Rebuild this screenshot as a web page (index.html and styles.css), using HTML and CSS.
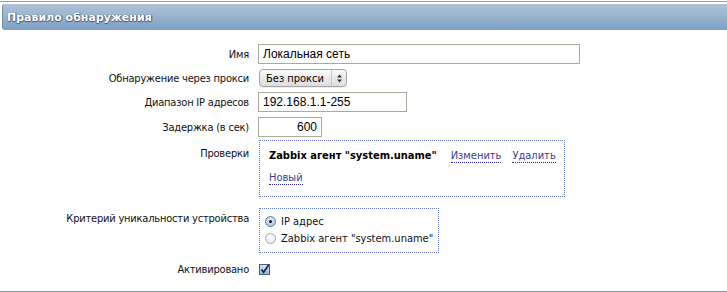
FILE: index.html
```html
<!DOCTYPE html>
<html lang="ru">
<head>
<meta charset="utf-8">
<title>Правило обнаружения</title>
<link rel="stylesheet" href="styles.css">
</head>
<body>
<div class="page">
  <div class="topline"></div>
  <div class="header">Правило обнаружения</div>
  <form class="form">
    <div class="row row-name">
      <label class="label">Имя</label>
      <div class="field"><input class="text text-name" type="text" value="Локальная сеть"></div>
    </div>
    <div class="row row-proxy">
      <label class="label">Обнаружение через прокси</label>
      <div class="field">
        <div class="select">
          <span class="select-text">Без прокси</span>
          <span class="select-arrows">
            <svg width="7" height="9" viewBox="0 0 7 9"><path d="M3.5 0.5 L6 3.5 L1 3.5 Z M3.5 8.5 L6 5.5 L1 5.5 Z" fill="#333"/></svg>
          </span>
        </div>
      </div>
    </div>
    <div class="row row-ip">
      <label class="label">Диапазон IP адресов</label>
      <div class="field"><input class="text text-ip" type="text" value="192.168.1.1-255"></div>
    </div>
    <div class="row row-delay">
      <label class="label">Задержка (в сек)</label>
      <div class="field"><input class="text text-delay" type="text" value="600"></div>
    </div>
    <div class="row row-checks">
      <label class="label label-top">Проверки</label>
      <div class="field">
        <div class="box checks">
          <div class="check-line">
            <span class="check-name">Zabbix агент "system.uname"</span>
            <a class="link">Изменить</a>
            <a class="link">Удалить</a>
          </div>
          <div class="check-line check-new"><a class="link">Новый</a></div>
        </div>
      </div>
    </div>
    <div class="row row-unique">
      <label class="label label-top2">Критерий уникальности устройства</label>
      <div class="field">
        <div class="box radios">
          <div class="radio-line"><span class="radio checked"></span><span>IP адрес</span></div>
          <div class="radio-line"><span class="radio"></span><span>Zabbix агент "system.uname"</span></div>
        </div>
      </div>
    </div>
    <div class="row row-active">
      <label class="label">Активировано</label>
      <div class="field">
        <svg class="checkbox" width="11" height="11" viewBox="0 0 11 11">
          <defs>
            <linearGradient id="cb" x1="0" y1="0" x2="0" y2="1">
              <stop offset="0" stop-color="#d8e6f6"/>
              <stop offset="1" stop-color="#8fb3e0"/>
            </linearGradient>
          </defs>
          <rect x="0.5" y="0.5" width="10" height="10" fill="url(#cb)" stroke="#4a5f80"/>
          <path d="M2.5 5.5 L4.6 8.3 L9.8 0.8" fill="none" stroke="#14213a" stroke-width="1.6"/>
        </svg>
      </div>
    </div>
  </form>
  <div class="bottomline"></div>
</div>
</body>
</html>
```
FILE: styles.css
```css
html, body {
  margin: 0;
  padding: 0;
  background: #fff;
}
.page {
  width: 727px;
  height: 292px;
  font-family: "DejaVu Sans Condensed", "DejaVu Sans", sans-serif;
  font-size: 11px;
  color: #111;
  display: flex;
  flex-direction: column;
  white-space: nowrap;
}
.topline {
  margin-top: 1px;
  height: 1px;
  background: #8e9db0;
}
.header {
  margin: 2px 0 0 2px;
  height: 26px;
  box-sizing: border-box;
  padding-left: 4px;
  display: flex;
  align-items: center;
  border-left: 1px solid #6f8fb0;
  border-radius: 3px 0 0 3px;
  background: linear-gradient(#adc2d8, #9cb5d0 45%, #7b9fc3);
  color: #fff;
  font-family: "DejaVu Sans", sans-serif;
  font-weight: bold;
  font-size: 11px;
  text-shadow: 0 1px 1px #3e5573, 1px 0 1px #3e5573;
}
.form {
  display: flex;
  flex-direction: column;
  padding-top: 14px;
}
.row {
  display: grid;
  grid-template-columns: 249px 1fr;
  column-gap: 9px;
  align-items: center;
}
.label {
  text-align: right;
  letter-spacing: -0.2px;
}
.row-name { height: 20px; }
.row-proxy { height: 18px; margin-top: 5px; }
.row-ip { height: 20px; margin-top: 5px; }
.row-delay { height: 20px; margin-top: 5px; }
.row-checks { margin-top: 3px; align-items: start; }
.row-unique { margin-top: 11px; align-items: start; }
.row-active { margin-top: 10px; height: 11px; }
.label-top { padding-top: 7px; }
.label-top2 { padding-top: 4px; }
.text {
  box-sizing: border-box;
  height: 20px;
  border: 1px solid #a9aa9c;
  padding: 0 4px;
  margin: 0;
  font-family: "Liberation Sans", sans-serif;
  font-size: 12px;
  color: #000;
  outline: none;
  display: block;
}
.text-name { width: 322px; }
.text-ip { width: 149px; }
.text-delay { width: 64px; text-align: right; }
.select {
  box-sizing: border-box;
  width: 88px;
  height: 18px;
  margin-left: 1px;
  border: 1px solid #a4a4a4;
  border-radius: 4px;
  background: linear-gradient(#fbfbfb, #eaeaea 50%, #dedede);
  display: flex;
  align-items: center;
  box-shadow: 0 1px 0 #eee;
}
.select-text {
  flex: 1;
  padding-left: 6px;
  color: #000;
}
.select-arrows {
  width: 14px;
  height: 100%;
  border-left: 1px solid #c8c8c8;
  display: flex;
  align-items: center;
  justify-content: center;
}
.box {
  border: 1px dotted #6677bb;
  margin-left: 1px;
}
.checks {
  width: 306px;
  height: 57px;
  box-sizing: border-box;
  padding: 8px 9px 0;
}
.check-line {
  display: flex;
  align-items: baseline;
  height: 16px;
}
.check-name {
  font-weight: bold;
  color: #000;
  margin-right: 14px;
}
.link {
  color: #3b3b8e;
  border-bottom: 1px dotted #2a2a88;
  margin-right: 11px;
  cursor: pointer;
}
.check-new { margin-top: 6px; }
.radios {
  width: 180px;
  height: 45px;
  box-sizing: border-box;
  padding: 4px 0 0 5px;
}
.radio-line {
  display: flex;
  align-items: center;
  height: 17px;
  gap: 5px;
}
.radio {
  width: 11px;
  height: 11px;
  box-sizing: border-box;
  border-radius: 50%;
  border: 1px solid #a8a8a8;
  background: radial-gradient(circle at 50% 35%, #ffffff, #e4e4e4);
  display: inline-block;
  position: relative;
}
.radio.checked {
  border-color: #5c7aa8;
  background: radial-gradient(circle at 50% 35%, #e6eefa, #9ebce4);
}
.radio.checked::after {
  content: "";
  position: absolute;
  left: 3px;
  top: 3px;
  width: 3px;
  height: 3px;
  border-radius: 50%;
  background: #111;
}
.checkbox {
  display: block;
  margin-left: 1px;
}
.bottomline {
  margin-top: auto;
  height: 1px;
  background: #8798ab;
}
```
